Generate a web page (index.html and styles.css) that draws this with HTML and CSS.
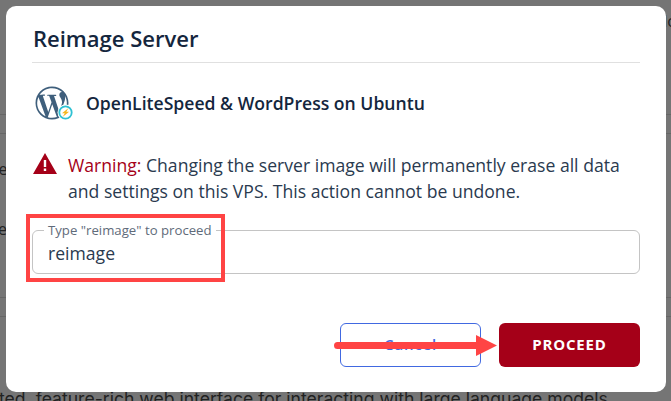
FILE: index.html
```html
<!DOCTYPE html>
<html lang="en">
<head>
<meta charset="utf-8">
<title>Reimage Server</title>
<link rel="stylesheet" href="styles.css">
</head>
<body>
<div class="page">
  <div class="bg-right-text">lo</div>
  <div class="bg-band"></div>
  <div class="bg-text-a">re</div>
  <div class="bg-text-b">el</div>
  <div class="bg-band bg-band-low"></div>
  <div class="bg-para">ted, feature-rich web interface for interacting with large language models</div>
</div>
<div class="modal">
  <h2 class="title">Reimage Server</h2>
  <div class="image-row">
    <svg class="wp" viewBox="0 0 40 40" width="40" height="40" aria-hidden="true">
      <g transform="translate(2.5 2.5) scale(1.375)">
        <path fill="#3f5f7c" d="M21.469 6.825c.84 1.537 1.318 3.3 1.318 5.175 0 3.979-2.156 7.456-5.363 9.325l3.295-9.527c.615-1.54.82-2.771.82-3.864 0-.405-.026-.78-.07-1.11m-7.981.105c.647-.03 1.232-.105 1.232-.105.582-.075.514-.93-.067-.899 0 0-1.755.135-2.88.135-1.064 0-2.85-.15-2.85-.15-.585-.03-.661.855-.075.885 0 0 .54.061 1.125.09l1.68 4.605-2.37 7.08L5.354 6.9c.649-.03 1.234-.1 1.234-.1.585-.075.516-.93-.065-.896 0 0-1.746.138-2.874.138-.2 0-.438-.008-.69-.015C4.911 3.15 8.235 1.215 12 1.215c2.809 0 5.365 1.072 7.286 2.833-.046-.003-.091-.009-.141-.009-1.06 0-1.812.923-1.812 1.914 0 .89.513 1.643 1.06 2.531.411.72.89 1.643.89 2.977 0 .915-.354 1.994-.821 3.479l-1.075 3.585-3.9-11.61.001.014zM12 22.784c-1.059 0-2.081-.153-3.048-.437l3.237-9.406 3.315 9.087c.024.053.05.101.078.149-1.12.393-2.325.609-3.582.609M1.211 12c0-1.564.336-3.05.935-4.39L7.29 21.709C3.694 19.96 1.212 16.271 1.211 12M12 0C5.385 0 0 5.385 0 12s5.385 12 12 12 12-5.385 12-12S18.615 0 12 0"/>
      </g>
      <circle cx="32.500" cy="28.500" r="8" fill="#fff"/>
      <circle cx="32.500" cy="28.500" r="6.200" fill="#fff" stroke="#2fc1d3" stroke-width="1.800"/>
      <path fill="#f5b81f" d="M35.500 24 29 29.300h2.800l-2.200 3.800 6.500-5.400h-2.800z"/>
    </svg>
    <span class="image-name">OpenLiteSpeed &amp; WordPress on Ubuntu</span>
  </div>
  <div class="warning">
    <svg class="warn-icon" viewBox="0 0 24 21" width="24" height="21" aria-hidden="true">
      <path fill="#a50018" fill-rule="evenodd" d="M12 0 24 21H0ZM10.8 7v7h2.4V7ZM10.8 15.6v2.4h2.4v-2.4Z"/>
    </svg>
    <p class="warn-text"><span class="warn-label">Warning:</span> Changing the server image will permanently erase all data<br>and settings on this VPS. This action cannot be undone.</p>
  </div>
  <fieldset class="field">
    <legend class="field-label">Type "reimage" to proceed</legend>
    <span class="field-value">reimage</span>
  </fieldset>
  <div class="actions">
    <button class="btn btn-cancel" type="button">Cancel</button>
    <button class="btn btn-proceed" type="button">PROCEED</button>
  </div>
</div>
<div class="callout-box"></div>
<svg class="callout-arrow" viewBox="0 0 163 21" width="163" height="21" aria-hidden="true">
  <path fill="#ff4444" d="M3.500 7H142V0L163 10.500 142 21V14H3.500a3.500 3.500 0 0 1 0-7z"/>
</svg>
</body>
</html>
```
FILE: styles.css
```css
* { box-sizing: border-box; }
html, body { margin: 0; height: 100%; }
body {
  overflow: hidden;
  background: #757575;
  font-family: "Open Sans", sans-serif;
  color: #14263d;
}
.page {
  position: relative;
  height: 401px;
  overflow: hidden;
  color: #222;
  font-size: 16px;
}
.bg-band {
  position: absolute;
  left: 0; right: 0;
  top: 114px;
  height: 20px;
  border-top: 1px solid #666;
  border-bottom: 1px solid #666;
}
.bg-band-low { top: 297px; }
.bg-text-a { position: absolute; left: -8px; top: 158px; }
.bg-text-b { position: absolute; left: -2px; top: 218px; }
.bg-right-text { position: absolute; right: -6px; top: 10px; }
.bg-para {
  position: absolute;
  left: -1px;
  top: 388px;
  white-space: nowrap;
  font-family: "Inter", sans-serif;
  font-size: 17.600px;
}
.modal {
  position: fixed;
  left: 6px;
  top: 6px;
  width: 660px;
  height: 386px;
  background: #fff;
  border-radius: 10px;
  padding: 16px 26px 0;
  display: flex;
  flex-direction: column;
}
.title {
  margin: 0;
  height: 41px;
  padding-left: 1px;
  font-size: 22px;
  line-height: 32px;
  font-weight: 600;
  color: #14263d;
  border-bottom: 1px solid #e0e0e0;
}
.image-row {
  display: flex;
  align-items: center;
  gap: 13px;
  margin-top: 21px;
  padding-left: 1px;
  height: 40px;
}
.wp { flex: none; }
.image-name { font-size: 17.600px; font-weight: 600; color: #14263d; margin-bottom: 2px; }
.warning {
  display: flex;
  gap: 11px;
  margin: 28px 0 0 1px;
}
.warn-icon { flex: none; margin-top: 1px; }
.warn-text {
  margin: 0;
  font-size: 17.600px;
  line-height: 26px;
  color: #2a3a4f;
}
.warn-label { color: #a50018; }
.field {
  margin: 19px 0 0;
  padding: 0 15px;
  height: 51px;
  border: 1px solid #c4c4c4;
  border-radius: 6px;
  min-width: 0;
}
.field-label {
  padding: 0 4px;
  margin-left: -4px;
  font-size: 13.200px;
  line-height: 14px;
  color: #5f6b7a;
}
.field-value {
  display: block;
  font-size: 17.600px;
  line-height: 26px;
  margin-top: 3px;
  color: #2a3a4f;
}
.actions {
  display: flex;
  justify-content: flex-end;
  gap: 18px;
  margin-top: 49px;
}
.btn {
  width: 141px;
  height: 44px;
  padding: 0 0 3px;
  border-radius: 6px;
  font-family: "Open Sans", sans-serif;
  font-size: 15px;
  letter-spacing: 0.800px;
}
.btn-cancel {
  background: #fff;
  border: 1px solid #4169e1;
  color: #4169e1;
  font-weight: 600;
}
.btn-proceed {
  background: #a50018;
  border: 0;
  color: #fff;
  font-weight: 700;
}
.callout-box {
  position: fixed;
  left: 26px;
  top: 214px;
  width: 199px;
  height: 68px;
  border: 4px solid #ff4444;
}
.callout-arrow {
  position: fixed;
  left: 334px;
  top: 335px;
}
```
